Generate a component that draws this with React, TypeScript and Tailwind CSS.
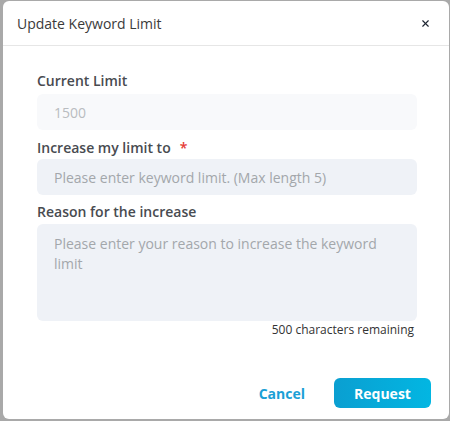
import { X } from "lucide-react";

// Update keyword limit dialog, shown over a dimmed page.

export default function App() {
  return (
    <div
      className="flex h-[421px] w-[450px] overflow-hidden bg-[#a9a9a9] pl-[3px] pt-[1px]"
      style={{ fontFamily: '"Open Sans", "Liberation Sans", sans-serif' }}
    >
      <div className="flex h-[418px] w-[446px] flex-col rounded-md bg-white">
        {/* header */}
        <div className="flex h-[45px] items-center justify-between border-b border-[#e6e6e6] pl-[14px] pr-[18px]">
          <div className="text-[14px] text-[#3a3a3a]">Update Keyword Limit</div>
          <X className="h-[11px] w-[11px] text-[#1f2633]" strokeWidth={2.5} />
        </div>

        {/* body */}
        <div className="flex flex-col pl-[34px] pr-[32px] pt-[25px]">
          <label className="text-[14px] font-semibold leading-5 text-[#484b50]">
            Current Limit
          </label>
          <div className="mt-[3px] flex h-[36px] items-center rounded-md bg-[#f8f9fb] px-[17px] text-[14px] text-[#b9bcc0]">
            1500
          </div>

          <label className="mt-[7px] flex h-5 items-center text-[14px] font-semibold text-[#484b50]">
            Increase my limit to
            <span className="ml-[9px] text-[#e53935]">*</span>
          </label>
          <input
            placeholder="Please enter keyword limit. (Max length 5)"
            className="mt-[2px] h-[36px] rounded-md bg-[#eff2f7] px-[17px] text-[14px] text-[#333] outline-none placeholder:text-[#a3a7ab]"
          />

          <label className="mt-[7px] text-[14px] font-semibold leading-5 text-[#484b50]">
            Reason for the increase
          </label>
          <textarea
            placeholder="Please enter your reason to increase the keyword limit"
            className="mt-[2px] h-[97px] resize-none rounded-md bg-[#eff2f7] px-[17px] py-[10px] text-[14px] leading-5 text-[#333] outline-none placeholder:text-[#a3a7ab]"
          />
          <div className="mt-[1px] pr-[3px] text-right text-[12px] leading-4 text-[#333]">
            500 characters remaining
          </div>
        </div>

        {/* footer */}
        <div className="mt-auto flex items-center justify-end gap-[29px] pb-[11px] pr-[18px]">
          <button className="text-[14px] font-bold text-[#1a9fd6]">Cancel</button>
          <button className="h-[30px] w-[97px] rounded-md bg-gradient-to-r from-[#0a9fd1] to-[#02b6e2] text-[14px] font-bold text-white">
            Request
          </button>
        </div>
      </div>
    </div>
  );
}
